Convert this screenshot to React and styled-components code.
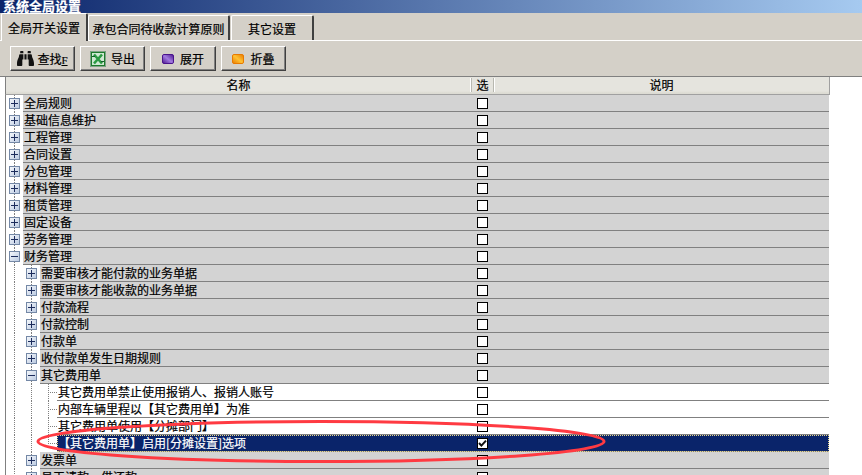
import React from 'react';
import styled, { createGlobalStyle } from 'styled-components';
import { FaBinoculars } from 'react-icons/fa';

const GlobalStyle = createGlobalStyle`
  html, body {
    margin: 0;
    padding: 0;
    background: #d4d0c8;
    overflow: hidden;
  }
`;

const rows = [
  { level: 0, text: '全局规则', box: '+' },
  { level: 0, text: '基础信息维护', box: '+' },
  { level: 0, text: '工程管理', box: '+' },
  { level: 0, text: '合同设置', box: '+' },
  { level: 0, text: '分包管理', box: '+' },
  { level: 0, text: '材料管理', box: '+' },
  { level: 0, text: '租赁管理', box: '+' },
  { level: 0, text: '固定设备', box: '+' },
  { level: 0, text: '劳务管理', box: '+' },
  { level: 0, text: '财务管理', box: '-' },
  { level: 1, text: '需要审核才能付款的业务单据', box: '+' },
  { level: 1, text: '需要审核才能收款的业务单据', box: '+' },
  { level: 1, text: '付款流程', box: '+' },
  { level: 1, text: '付款控制', box: '+' },
  { level: 1, text: '付款单', box: '+' },
  { level: 1, text: '收付款单发生日期规则', box: '+' },
  { level: 1, text: '其它费用单', box: '-' },
  { level: 2, text: '其它费用单禁止使用报销人、报销人账号' },
  { level: 2, text: '内部车辆里程以【其它费用单】为准' },
  { level: 2, text: '其它费用单使用【分摊部门】' },
  { level: 2, text: '【其它费用单】启用[分摊设置]选项', selected: true, checked: true, last: true },
  { level: 1, text: '发票单', box: '+' },
  { level: 1, text: '员工请款、借还款', box: '+' },
];

function App() {
  return (
    <Page>
      <GlobalStyle />
      <TitleBar>系统全局设置</TitleBar>
      <TabBar>
        <Tab $active $width={87}>全局开关设置</Tab>
        <Tab $width={142}>承包合同待收款计算原则</Tab>
        <Tab $width={83} $gap={1}>其它设置</Tab>
      </TabBar>
      <Toolbar>
        <ToolButton $width={65} $gap={3}>
          <FaBinoculars size={17} color="#111" />
          <span>查找<SmallKey>F</SmallKey></span>
        </ToolButton>
        <ToolButton $width={65}>
          <ExcelIcon />
          <span>导出</span>
        </ToolButton>
        <ToolButton $width={66} $gap={6}>
          <GemIcon from="#a27be0" to="#4a148c" id="gemPurple" />
          <span>展开</span>
        </ToolButton>
        <ToolButton $width={65} $gap={6}>
          <GemIcon from="#ffc233" to="#e87a00" id="gemOrange" />
          <span>折叠</span>
        </ToolButton>
      </Toolbar>
      <Grid>
        <HeaderRow>
          <HeaderName>名称</HeaderName>
          <HeaderCheck>选</HeaderCheck>
          <HeaderDesc>说明</HeaderDesc>
        </HeaderRow>
        {rows.map((row) => (
          <TreeRow key={row.text} {...row} />
        ))}
      </Grid>
      <Annotation viewBox="0 0 862 475" width="862" height="475">
        <ellipse cx="321" cy="441.5" rx="283" ry="20" fill="none" stroke="#ff3a42" strokeWidth="3" />
      </Annotation>
    </Page>
  );
}

function TreeRow({ level, text, box, selected, checked, last }) {
  const guides = [];
  for (let i = 0; i < level; i++) {
    guides.push(<Gutter key={i} />);
  }
  return (
    <Row>
      {guides}
      <Gutter $stub={!box} $last={last}>
        {box && <Expander>{box === '+' ? <PlusMark /> : <MinusMark />}</Expander>}
      </Gutter>
      <RowBody $selected={selected} $leaf={!box}>
        <RowName $selected={selected}>{text}</RowName>
        <CheckCell>
          <CheckBox>
            {checked && (
              <svg width="9" height="9" viewBox="0 0 9 9">
                <path d="M1 4 L3.4 6.6 L8 1.6" fill="none" stroke="#111" strokeWidth="2" />
              </svg>
            )}
          </CheckBox>
        </CheckCell>
        <DescCell />
      </RowBody>
    </Row>
  );
}

function PlusMark() {
  return (
    <svg width="7" height="7" viewBox="0 0 7 7">
      <path d="M0 3.5H7M3.5 0V7" stroke="#1c2c5c" strokeWidth="1" />
    </svg>
  );
}

function MinusMark() {
  return (
    <svg width="7" height="7" viewBox="0 0 7 7">
      <path d="M0 3.5H7" stroke="#1c2c5c" strokeWidth="1" />
    </svg>
  );
}

function ExcelIcon() {
  return (
    <svg width="16" height="16" viewBox="0 0 16 16">
      <rect x="0.5" y="0.5" width="15" height="15" fill="#fff" stroke="#14602a" strokeWidth="1" strokeDasharray="1 1" />
      <rect x="1.5" y="1.5" width="13" height="13" fill="#cfe8d3" stroke="#1d7a2c" />
      <path d="M4 3.5 L12 12.5 M12 3.5 L4 12.5" stroke="#2a9a42" strokeWidth="2.6" />
      <path d="M2 5.5H5M11 10.5H14" stroke="#14602a" strokeWidth="1" />
    </svg>
  );
}

function GemIcon({ from, to, id }) {
  return (
    <svg width="12" height="10" viewBox="0 0 12 10">
      <defs>
        <linearGradient id={id} x1="0" y1="1" x2="1" y2="0">
          <stop offset="0" stopColor={to} />
          <stop offset="0.5" stopColor={from} />
          <stop offset="1" stopColor={to} />
        </linearGradient>
      </defs>
      <rect x="0.5" y="0.5" width="11" height="9" rx="1.5" fill={`url(#${id})`} stroke={to} />
    </svg>
  );
}

const fontStack = `"Noto Sans CJK SC", "Liberation Sans", sans-serif`;

const Page = styled.div`
  position: relative;
  width: 862px;
  height: 475px;
  overflow: hidden;
  background: #d4d0c8;
  font-family: ${fontStack};
  font-size: 12px;
  color: #000;
  -webkit-text-stroke: 0.2px;
`;

const TitleBar = styled.div`
  height: 13px;
  line-height: 11px;
  padding-left: 3px;
  overflow: hidden;
  color: #fff;
  font-size: 13px;
  font-weight: 700;
  background: linear-gradient(to right, #0a246a, #a6caf0);
`;

const TabBar = styled.div`
  height: 27px;
  padding-left: 1px;
  display: flex;
  align-items: flex-end;
  border-bottom: 1px solid #fff;
`;

const Tab = styled.div`
  box-sizing: border-box;
  width: ${(p) => p.$width}px;
  height: ${(p) => (p.$active ? 28 : 25)}px;
  margin-left: ${(p) => p.$gap || 0}px;
  margin-bottom: ${(p) => (p.$active ? -1 : 0)}px;
  display: flex;
  align-items: center;
  justify-content: center;
  background: #d4d0c8;
  border-top: 1px solid #fff;
  border-left: 1px solid #fff;
  border-right: 2px solid #404040;
  border-top-left-radius: 2px;
  border-top-right-radius: 2px;
  position: relative;
`;

const Toolbar = styled.div`
  height: 35px;
  box-sizing: border-box;
  padding: 5px 0 0 10px;
  display: flex;
  align-items: flex-start;
  gap: 5px;
`;

const ToolButton = styled.div`
  box-sizing: border-box;
  width: ${(p) => p.$width}px;
  height: 25px;
  display: flex;
  align-items: center;
  justify-content: center;
  gap: ${(p) => p.$gap || 5}px;
  background: #d4d0c8;
  border-top: 1px solid #fff;
  border-left: 1px solid #fff;
  border-right: 1px solid #404040;
  border-bottom: 1px solid #404040;
  box-shadow: inset -1px -1px 0 #808080;
`;

const SmallKey = styled.span`
  font-family: "Liberation Serif", serif;
  font-size: 11px;
  text-decoration: underline;
`;

const Grid = styled.div`
  background: #fff;
  border-top: 1px solid #808080;
  padding-left: 5px;
  height: 398px;
`;

const HeaderRow = styled.div`
  box-sizing: border-box;
  width: 825px;
  height: 18px;
  display: flex;
  background: linear-gradient(to bottom, #e5e4de 0 14px, #dcdbd3 16px);
  border-left: 1px solid #808080;
  border-right: 1px solid #a0a0a0;
  border-bottom: 1px solid #a0a0a0;
`;

const HeaderCell = styled.div`
  line-height: 16px;
  text-align: center;
`;

const HeaderName = styled(HeaderCell)`
  flex: 1;
`;

const HeaderCheck = styled(HeaderCell)`
  width: 23px;
  box-sizing: border-box;
  margin: 1px 0 2px;
  line-height: 14px;
  border-left: 1px solid #b8b8b0;
  border-right: 1px solid #b8b8b0;
  box-shadow: -1px 0 0 #fff, 1px 0 0 #fff;
`;

const HeaderDesc = styled(HeaderCell)`
  width: 335px;
`;

const Row = styled.div`
  box-sizing: border-box;
  width: 825px;
  height: 17px;
  display: flex;
  background: #fff;
  border-left: 1px solid #808080;
  border-right: 1px solid transparent;
`;

const dots = (direction) =>
  `repeating-linear-gradient(${direction}, #808080 0 1px, transparent 1px 2px)`;

const Gutter = styled.div`
  flex: 0 0 17px;
  display: flex;
  align-items: center;
  justify-content: center;
  background-repeat: no-repeat;
  background-image: ${dots('to bottom')}${(p) => (p.$stub ? `, ${dots('to right')}` : '')};
  background-size: 1px ${(p) => (p.$last ? '9px' : '100%')}${(p) => (p.$stub ? ', 9px 1px' : '')};
  background-position: 8px 0${(p) => (p.$stub ? ', 8px 8px' : '')};
`;

const Expander = styled.div`
  box-sizing: border-box;
  width: 11px;
  height: 11px;
  display: flex;
  align-items: center;
  justify-content: center;
  border: 1px solid #7488a6;
  background: linear-gradient(135deg, #f4f7fb, #bccbe2);
`;

const RowBody = styled.div`
  flex: 1;
  min-width: 0;
  box-sizing: border-box;
  display: flex;
  background: ${(p) => (p.$selected ? '#0a246a' : p.$leaf ? '#fff' : '#d3d3d3')};
  border-bottom: 1px solid #808080;
  outline: ${(p) => (p.$selected ? '1px dotted #e8d88c' : 'none')};
  outline-offset: -1px;
`;

const RowName = styled.div`
  flex: 1;
  padding-left: 1px;
  line-height: 15px;
  white-space: nowrap;
  color: ${(p) => (p.$selected ? '#fff' : '#000')};
`;

const CheckCell = styled.div`
  width: 23px;
  display: flex;
  align-items: center;
  justify-content: center;
`;

const CheckBox = styled.div`
  box-sizing: border-box;
  width: 11px;
  height: 11px;
  display: flex;
  align-items: center;
  justify-content: center;
  background: #fff;
  border: 1px solid #000;
`;

const DescCell = styled.div`
  width: 335px;
`;

const Annotation = styled.svg`
  position: absolute;
  left: 0;
  top: 0;
  pointer-events: none;
`;

export default App;
